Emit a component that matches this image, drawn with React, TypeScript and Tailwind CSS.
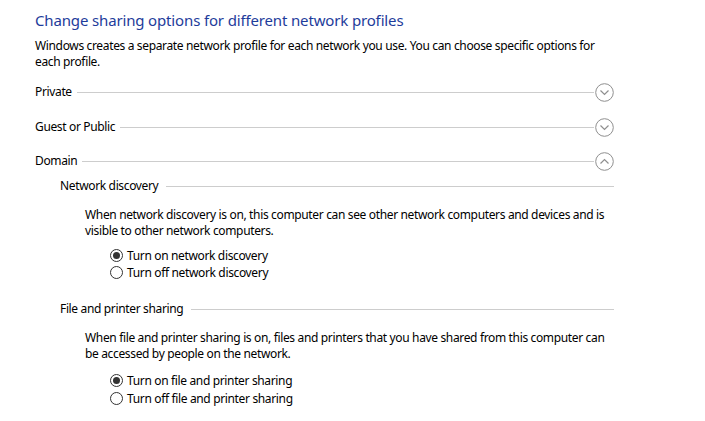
import React from "react";

const font = { fontFamily: '"Segoe UI", "Noto Sans", sans-serif' };

function Chevron({ up }: { up?: boolean }) {
  return (
    <svg width="19" height="19" viewBox="0 0 19 19" className="shrink-0">
      <circle cx="9.5" cy="9.5" r="8.8" fill="none" stroke="#8f8f8f" strokeWidth="1" />
      <path
        d={up ? "M5.5 11.5 L9.5 7.5 L13.5 11.5" : "M5.5 7.5 L9.5 11.5 L13.5 7.5"}
        fill="none"
        stroke="#8f8f8f"
        strokeWidth="1.2"
      />
    </svg>
  );
}

function Radio({ checked, label, className }: { checked?: boolean; label: string; className?: string }) {
  return (
    <div className={`flex h-[17px] items-center ${className ?? ""}`}>
      <span className="flex h-[13px] w-[13px] shrink-0 items-center justify-center rounded-full border border-[#333]">
        {checked && <span className="h-[7px] w-[7px] rounded-full bg-[#333]" />}
      </span>
      <span className="ml-[4px] whitespace-nowrap">{label}</span>
    </div>
  );
}

function ProfileRow({ label, up, className }: { label: string; up?: boolean; className?: string }) {
  return (
    <div className={`flex h-[20px] items-center ${className ?? ""}`}>
      <span className="whitespace-nowrap">{label}</span>
      <div className="ml-[5px] mr-[1px] h-px flex-1 bg-[#cdcdcd]" />
      <Chevron up={up} />
    </div>
  );
}

function SubHeader({ label, className }: { label: string; className?: string }) {
  return (
    <div className={`flex h-[16px] items-center pl-[25px] ${className ?? ""}`}>
      <span className="whitespace-nowrap">{label}</span>
      <div className="ml-[8px] h-px flex-1 bg-[#cdcdcd]" />
    </div>
  );
}

export default function App() {
  return (
    <div className="h-[421px] w-[705px] bg-white text-[12px] tracking-[-0.35px] text-black" style={font}>
      <div className="w-[614px] pl-[35px]">
        <h1 className="mt-[8px] h-[24px] whitespace-nowrap text-[15px] leading-[24px] tracking-[-0.15px] text-[#1e3c9b]">
          Change sharing options for different network profiles
        </h1>
        <p className="mt-[6px] leading-[16px]">
          <span className="whitespace-nowrap">
            Windows creates a separate network profile for each network you use. You can choose specific options for
          </span>
          <br />
          each profile.
        </p>

        <ProfileRow label="Private" className="mt-[12px]" />
        <ProfileRow label="Guest or Public" className="mt-[15px]" />
        <ProfileRow label="Domain" up className="mt-[14px]" />

        <SubHeader label="Network discovery" className="mt-[7px]" />
        <p className="mt-[13px] pl-[50px] leading-[16px]">
          <span className="whitespace-nowrap">
            When network discovery is on, this computer can see other network computers and devices and is
          </span>
          <br />
          visible to other network computers.
        </p>
        <div className="mt-[8px] pl-[75px]">
          <Radio checked label="Turn on network discovery" />
          <Radio label="Turn off network discovery" />
        </div>

        <SubHeader label="File and printer sharing" className="mt-[20px]" />
        <p className="mt-[13px] pl-[50px] leading-[16px]">
          <span className="whitespace-nowrap">
            When file and printer sharing is on, files and printers that you have shared from this computer can
          </span>
          <br />
          be accessed by people on the network.
        </p>
        <div className="mt-[10px] pl-[75px]">
          <Radio checked label="Turn on file and printer sharing" />
          <Radio label="Turn off file and printer sharing" className="mt-[1px]" />
        </div>
      </div>
    </div>
  );
}
